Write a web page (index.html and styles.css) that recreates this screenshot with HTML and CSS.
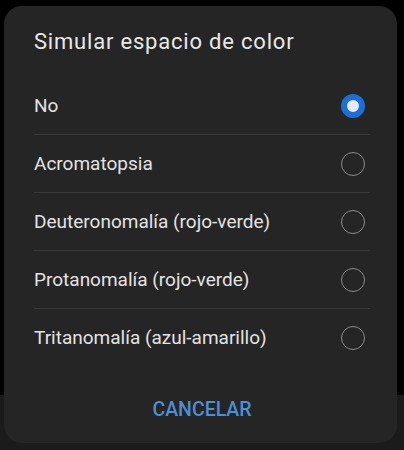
FILE: index.html
```html
<!DOCTYPE html>
<html lang="es">
<head>
<meta charset="utf-8">
<link rel="stylesheet" href="styles.css">
</head>
<body>
<div class="dialog">
  <div class="title">Simular espacio de color</div>
  <ul class="options">
    <li class="option"><span class="label">No</span><span class="radio checked"></span></li>
    <li class="option"><span class="label">Acromatopsia</span><span class="radio"></span></li>
    <li class="option"><span class="label">Deuteronomalía (rojo-verde)</span><span class="radio"></span></li>
    <li class="option"><span class="label">Protanomalía (rojo-verde)</span><span class="radio"></span></li>
    <li class="option"><span class="label">Tritanomalía (azul-amarillo)</span><span class="radio"></span></li>
  </ul>
  <div class="actions"><span class="btn">CANCELAR</span></div>
</div>
</body>
</html>
```

FILE: styles.css
```css
html, body {
  margin: 0;
  padding: 0;
}
body {
  width: 404px;
  height: 450px;
  overflow: hidden;
  background: linear-gradient(to bottom, #000 0, #000 395px, #1b1b1b 395px, #1b1b1b 100%);
  font-family: Roboto, "Noto Sans", sans-serif;
  padding: 6px 7px 0 4px;
  box-sizing: border-box;
}
.dialog {
  background: #252525;
  border-radius: 18px;
  height: 437px;
  padding: 0 27px 0 30px;
  box-sizing: border-box;
  display: flex;
  flex-direction: column;
}
.title {
  color: #e9e9e9;
  font-size: 22px;
  letter-spacing: 0.8px;
  line-height: 26px;
  padding-top: 23px;
  margin-bottom: 22px;
}
.options {
  list-style: none;
  margin: 0;
  padding: 0;
}
.option {
  height: 57px;
  display: flex;
  align-items: center;
  justify-content: space-between;
  padding-right: 5px;
  border-bottom: 1px solid #383838;
}
.option:last-child {
  border-bottom: none;
}
.label {
  color: #e3e3e3;
  font-size: 19px;
}
.radio {
  width: 24px;
  height: 24px;
  border-radius: 50%;
  border: 1.5px solid #8c8c8c;
  box-sizing: border-box;
}
.radio.checked {
  border: 6px solid #1c6fd8;
  background: #e9e9f4;
}
.actions {
  display: flex;
  justify-content: center;
  padding-top: 32px;
}
.btn {
  color: #4c8fd4;
  font-size: 19.5px;
  font-weight: 500;
  line-height: 24px;
}
```
